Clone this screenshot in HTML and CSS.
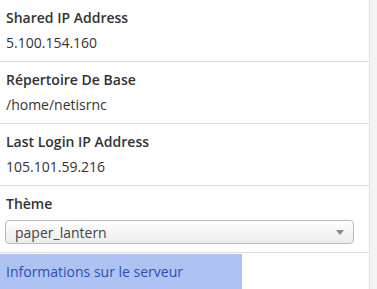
FILE: index.html
```html
<!DOCTYPE html>
<html lang="fr">
<head>
    <meta charset="UTF-8">
    <title>Informations générales</title>
    <link rel="stylesheet" href="styles.css">
</head>
<body>
    <div class="panel">
        <div class="row">
            <div class="label">Shared IP Address</div>
            <div class="value">5.100.154.160</div>
        </div>
        <div class="row">
            <div class="label">Répertoire De Base</div>
            <div class="value">/home/netisrnc</div>
        </div>
        <div class="row">
            <div class="label">Last Login IP Address</div>
            <div class="value">105.101.59.216</div>
        </div>
        <div class="row">
            <div class="label">Thème</div>
            <div class="select">
                <span>paper_lantern</span>
                <span class="arrow"></span>
            </div>
        </div>
        <div class="footer">
            <a class="server-link" href="#">Informations sur le serveur</a>
        </div>
    </div>
</body>
</html>
```

FILE: styles.css
```css
html, body {
    margin: 0;
    padding: 0;
}

body {
    font-family: "Open Sans", "Noto Sans", sans-serif;
    font-size: 14px;
    color: #333;
    background-color: #f4f4f4;
    width: 377px;
    height: 289px;
    overflow: hidden;
}

.panel {
    width: 370px;
    height: 289px;
    background-color: white;
    border-right: 1px solid #e2e2e2;
    box-sizing: border-box;
}

.row {
    padding: 8px 6px;
    border-bottom: 1px solid #ddd;
}

.label {
    font-weight: 600;
    line-height: 20px;
}

.value {
    line-height: 20px;
    margin-top: 5px;
}

.select {
    display: flex;
    align-items: center;
    justify-content: space-between;
    margin-top: 6px;
    margin-left: -1px;
    width: 349px;
    height: 24px;
    padding: 0 9px;
    box-sizing: border-box;
    border: 1px solid #b8b8b8;
    border-radius: 4px;
    background: linear-gradient(#ffffff, #ececec);
    color: #444;
}

.arrow {
    width: 0;
    height: 0;
    border-left: 4px solid transparent;
    border-right: 4px solid transparent;
    border-top: 5px solid #888;
}

.footer {
    padding-top: 1px;
}

.server-link {
    display: block;
    width: 242px;
    height: 36px;
    line-height: 36px;
    padding-left: 6px;
    box-sizing: border-box;
    background-color: #afc3f2;
    color: #2a4fb5;
    text-decoration: none;
}
```
